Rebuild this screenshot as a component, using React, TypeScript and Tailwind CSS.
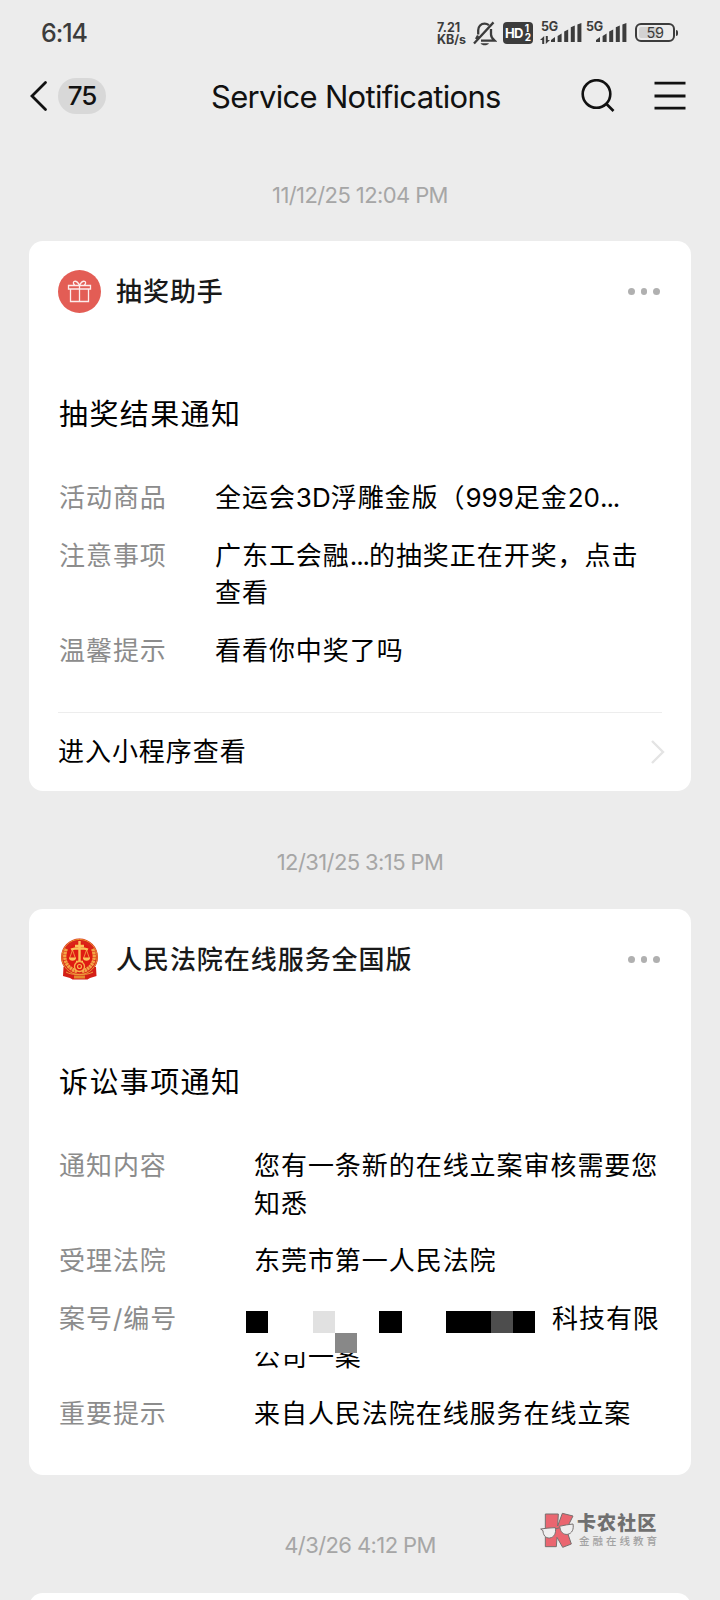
import React from 'react';

interface Row {
  label: string;
  lines: string[];
  masked?: boolean;
}

const lotteryRows: Row[] = [
  { label: '活动商品', lines: ['全运会3D浮雕金版（999足金20...'] },
  { label: '注意事项', lines: ['广东工会融...的抽奖正在开奖，点击', '查看'] },
  { label: '温馨提示', lines: ['看看你中奖了吗'] },
];

const courtRows: Row[] = [
  { label: '通知内容', lines: ['您有一条新的在线立案审核需要您', '知悉'] },
  { label: '受理法院', lines: ['东莞市第一人民法院'] },
  { label: '案号/编号', lines: ['科技有限', '公司一案'], masked: true },
  { label: '重要提示', lines: ['来自人民法院在线服务在线立案'] },
];

const SignalBars = () => (
  <svg width="31" height="20" viewBox="0 0 31 20" fill="#3c3c3c">
    <path d="M0 17l4-3v5H0zM6.6 13l4-2.6V19h-4zM13.2 8.6l4-2V19h-4zM19.8 4.2l4-1.6V19h-4zM26.4 1.6l4-1.6v19h-4z" />
  </svg>
);

const StatusBar = () => (
  <div className="flex h-[66px] items-center pl-[41px] pr-[45px] text-[#3c3c3c]">
    <span className="pt-px text-[25px] font-medium leading-none tracking-[-1.1px]">6:14</span>
    <div className="ml-auto flex h-6 items-start">
      <div className="w-[36px] whitespace-nowrap pt-px text-[12.5px] font-bold leading-[12px]">
        <div>7.21</div>
        <div>KB/s</div>
      </div>
      <svg width="24" height="25" viewBox="0 0 24 25" fill="none" stroke="#3c3c3c" strokeWidth="2.3">
        <path d="M5.2 13.5V9.2C5.2 5.3 8 2.6 11.6 2.6c1.6 0 3.1.6 4.3 1.5M18 8v5.5c0 2.4 1.2 4 3.6 6.1H8M1 22.500 20.500 1.400M5 14.500l-2 3.500" />
        <path d="M7.500 22.200h8.500c-1 1.500-2.500 2.100-4.300 2.100s-3.200-.7-4.200-2.100z" fill="#3c3c3c" stroke="none" />
      </svg>
      <div className="relative ml-[6px] mt-px h-[22px] w-[30px] rounded-[4px] bg-[#3c3c3c] text-white">
        <span className="absolute left-[2px] top-[5px] text-[13px] font-bold leading-[13px] tracking-[-0.8px]">HD</span>
        <span className="absolute right-[4px] top-[2px] text-[10px] font-bold leading-[9px]">1</span>
        <span className="absolute right-[2px] top-[11px] text-[10px] font-bold leading-[9px]">2</span>
      </div>
      <div className="relative ml-[8px] h-6 w-[43px]">
        <span className="absolute left-0 top-0 text-[12.5px] font-bold leading-[12px] tracking-[-0.2px]">5G</span>
        <svg className="absolute left-[-1px] top-[15px]" width="10" height="8" viewBox="0 0 10 8" fill="#3c3c3c">
          <path d="M4.200 0v8H2.200V4H0zM5.800 8V0h2v4H10z" />
        </svg>
        <div className="absolute left-[10px] top-[2px]">
          <SignalBars />
        </div>
      </div>
      <div className="relative ml-[2px] h-6 w-[42px]">
        <span className="absolute left-0 top-0 text-[12.5px] font-bold leading-[12px] tracking-[-0.2px]">5G</span>
        <div className="absolute left-[10px] top-[2px]">
          <SignalBars />
        </div>
      </div>
      <div className="relative ml-[7px] mt-[2px] h-[19px] w-[40px] rounded-[6px] border-2 border-[#3c3c3c] p-[2px]">
        <div className="h-full w-[20px] rounded-[2px] bg-[#d2d2d2]" />
        <span className="absolute inset-0 text-center text-[14.5px] leading-[15px] tracking-[-0.3px]">59</span>
        <span className="absolute -right-[5px] top-[5px] h-[6px] w-[2px] rounded-r bg-[#3c3c3c]" />
      </div>
    </div>
  </div>
);

const Header = () => (
  <header className="relative flex h-[59px] items-center pl-[29px] pr-[34px] text-[#111]">
    <svg width="19" height="32" viewBox="0 0 19 32" fill="none" stroke="#111" strokeWidth="2.8" strokeLinecap="round">
      <path d="M16.500 2.500 3 16l13.500 13.500" />
    </svg>
    <span className="ml-[10px] flex h-[36px] w-[48px] items-center justify-center rounded-full bg-[#d8d8d8] text-[26px] font-medium leading-none tracking-[-1.2px]">75</span>
    <h1 className="absolute left-[211px] top-[11px] whitespace-nowrap text-[31px] leading-[40px] tracking-[-0.7px]">Service Notifications</h1>
    <svg className="ml-auto" width="34" height="34" viewBox="0 0 34 34" fill="none" stroke="#111" strokeWidth="2.600">
      <circle cx="15.500" cy="15" r="13.800" />
      <path d="m25 24.500 7.500 7.500" />
    </svg>
    <svg className="ml-[39px]" width="32" height="30" viewBox="0 0 32 30" stroke="#111" strokeWidth="2.800">
      <path d="M.5 2.200h31M.5 15h31M.5 27.200h31" />
    </svg>
  </header>
);

const DateLabel: React.FC<{ children: React.ReactNode }> = ({ children }) => (
  <div className="text-center text-[22px] leading-[30px] tracking-[-0.6px] text-[#a6a6a6]">{children}</div>
);

const GiftIcon = () => (
  <svg width="43" height="43" viewBox="0 0 43 43" fill="none" stroke="#fdeceb" strokeWidth="1.300">
    <circle cx="21.500" cy="21.500" r="21.500" fill="#e35d55" stroke="none" />
    <path d="M10.500 15.500h22v3.500h-22zM12.500 19v12.500h18V19M21.500 15.500v16M21.500 15.300c-1.500-3-3.500-4.300-5-4-1.700.4-1.400 2.600.3 4M21.500 15.300c1.500-3 3.500-4.300 5-4 1.700.4 1.400 2.600-.3 4" />
  </svg>
);

const CourtEmblem = () => (
  <svg width="43" height="43" viewBox="0 0 43 43" fill="none">
    <path d="M5.500 29 5 38l7 2 2.500 1.500h15L32 40l6.500-2L38 29z" fill="#d41f16" />
    <circle cx="21.500" cy="19" r="18.500" fill="#d9261a" />
    <circle cx="21.500" cy="19" r="17.600" stroke="#e9912f" strokeWidth="1" />
    <path d="M8.500 11C4.500 20 8 30 19 33.500M34.500 11C38.500 20 35 30 24 33.500" stroke="#f3a545" strokeWidth="3.600" strokeDasharray="2.400 .5" />
    <circle cx="21.500" cy="18" r="13" fill="#df1c12" />
    <path d="M21.500 3v22M17 8h9M13 11.500c4-1.500 13-1.500 17 0M18 24h7" stroke="#fbc35a" strokeWidth="2.400" />
    <path d="m14.500 12-3 8.500h6zM28.500 12l-3 8.500h6z" stroke="#f8b24d" strokeWidth=".8" />
    <path d="M11 19.500h7c0 2.200-1.400 3.200-3.500 3.200S11 21.700 11 19.500zM25 19.500h7c0 2.200-1.400 3.200-3.500 3.200S25 21.700 25 19.500z" fill="#fbc35a" />
    <circle cx="21.500" cy="28.500" r="5" fill="#df1c12" stroke="#f8b24d" strokeWidth="1.300" />
    <circle cx="21.500" cy="28.500" r="2" stroke="#f8b24d" strokeWidth="1.200" />
    <path d="M8 34c3 1.800 7 2.300 9 2.300h9c2 0 6-.5 9-2.300" stroke="#f0a040" strokeWidth="1" />
    <path d="M16 37.500h11v3H16z" fill="#e58a2e" />
  </svg>
);

const Mosaic = () => (
  <div className="absolute left-[-8.500px] top-[11px] h-[41px] w-[290px]">
    <div className="absolute inset-x-0 bottom-0 h-[19px] bg-white" />
    <div className="relative flex h-[22px]">
      <span className="w-[22px] bg-black" />
      <span className="ml-[45px] w-[22px] bg-[#e1e1e1]" />
      <span className="ml-[44px] w-[23px] bg-black" />
      <span className="ml-[44px] w-[45px] bg-black" />
      <span className="w-[22px] bg-[#4d4d4d]" />
      <span className="w-[22px] bg-black" />
    </div>
    <div className="relative ml-[89px] h-[20px] w-[22px] bg-[#888]" />
  </div>
);

// digits and dots sit tighter than the Chinese glyphs
const MixedText: React.FC<{ text: string }> = ({ text }) => (
  <>
    {text.split(/([0-9A-Z]+|\.{3})/).map((part, i) => {
      if (part === '...') return <span key={i} className="tracking-[-1.100px]">{part}</span>;
      if (i % 2 === 1) return <span key={i} className="tracking-normal">{part}</span>;
      return part;
    })}
  </>
);

interface CardProps {
  icon: React.ReactNode;
  name: string;
  title: string;
  rows: Row[];
  labelClass: string;
  children?: React.ReactNode;
}

const Card: React.FC<CardProps> = ({ icon, name, title, rows, labelClass, children }) => (
  <section className="mx-[29px] rounded-[14px] bg-white px-[29px] text-[26px] tracking-[0.95px]">
    <div className="flex h-[101px] items-center">
      {icon}
      <span className="ml-[15px] pt-px font-medium leading-none text-[#191919]">{name}</span>
      <span className="ml-auto mr-[2.500px] flex gap-[6px]">
        <i className="size-[6.5px] rounded-full bg-[#b0b0b0]" />
        <i className="size-[6.5px] rounded-full bg-[#b0b0b0]" />
        <i className="size-[6.5px] rounded-full bg-[#b0b0b0]" />
      </span>
    </div>
    <h2 className="mt-[51px] pl-px text-[29px] leading-[44px] tracking-[1.4px] text-black">{title}</h2>
    <dl className="mt-[42px] flex flex-col gap-[20px] pl-px leading-[37.700px]">
      {rows.map((row) => (
        <div key={row.label} className="flex whitespace-nowrap">
          <dt className={`${labelClass} shrink-0 text-[#8c8c8c]`}>{row.label}</dt>
          <dd className="relative flex-1 text-black">
            {row.lines.map((line, i) => (
              <div key={line} className={row.masked && i === 0 ? 'pl-[298px]' : ''}>
                <MixedText text={line} />
              </div>
            ))}
            {row.masked && <Mosaic />}
          </dd>
        </div>
      ))}
    </dl>
    {children}
  </section>
);

const Watermark = () => (
  <div className="absolute left-[540px] top-[1512px] flex">
    <svg width="34" height="36" viewBox="810 186 102 108" stroke="#77706f" strokeWidth="3">
      <path d="M826 192h39l-2 36 14-38 32 8-20 40 15 44-26 10-17-30-2 28h-33z" fill="#ea6670" />
      <path d="M812 237c14-2 29-4 44-4 3 16-3 29-17 31-13 1-20-10-20-22zM868 229c14-3 28-6 41-7 3 16-3 28-16 31-13 2-22-8-23-20z" fill="#efefef" />
      <path d="m856 237 13-4" fill="none" />
    </svg>
    <div className="ml-[3px] whitespace-nowrap pt-px">
      <div className="text-[19px] font-black leading-[22px] tracking-[1.100px] text-[#707070]">卡农社区</div>
      <div className="ml-[2px] text-[10.500px] font-medium leading-[13px] tracking-[3px] text-[#a2a2a2]">金融在线教育</div>
    </div>
  </div>
);

export default function App() {
  return (
    <div
      lang="zh-CN"
      className="relative h-[1600px] w-[720px] overflow-hidden bg-[#ececec] font-['Inter','Noto_Sans_CJK_SC',sans-serif]"
    >
      <StatusBar />
      <Header />
      <main className="pt-[55px]">
        <DateLabel>11/12/25 12:04 PM</DateLabel>
        <div className="h-[31px]" />
        <Card icon={<GiftIcon />} name="抽奖助手" title="抽奖结果通知" rows={lotteryRows} labelClass="w-[156px]">
          <div className="mt-[42px] flex h-[79px] items-center justify-between border-t border-[#ededed] pt-px text-black">
            <span className="leading-none">进入小程序查看</span>
            <svg className="-mr-[3px]" width="14" height="24" viewBox="0 0 14 24" fill="none" stroke="#e4e4e4" strokeWidth="2.400">
              <path d="m1 1 11 11L1 23" />
            </svg>
          </div>
        </Card>
        <div className="h-[56px]" />
        <DateLabel>12/31/25 3:15 PM</DateLabel>
        <div className="h-[32px]" />
        <Card icon={<CourtEmblem />} name="人民法院在线服务全国版" title="诉讼事项通知" rows={courtRows} labelClass="w-[195px]">
          <div className="h-[42px]" />
        </Card>
        <div className="h-[55px]" />
        <DateLabel>4/3/26 4:12 PM</DateLabel>
        <div className="mx-[29px] mt-[33px] h-[60px] rounded-[14px] bg-white" />
      </main>
      <Watermark />
    </div>
  );
}
